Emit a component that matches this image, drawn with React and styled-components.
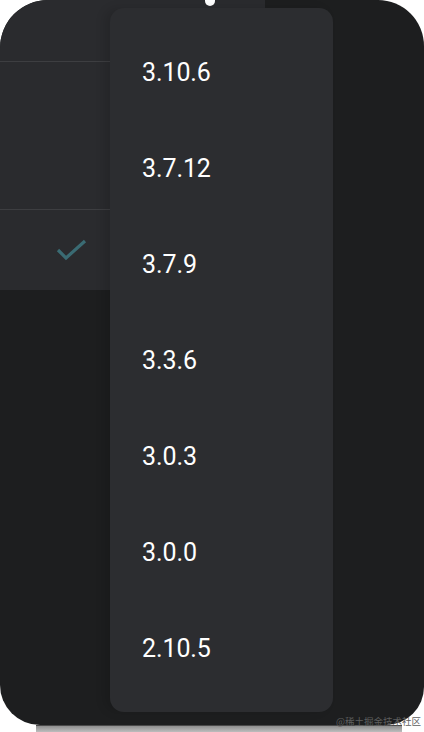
import React from "react";
import styled, { createGlobalStyle } from "styled-components";

const Global = createGlobalStyle`
  html, body { margin: 0; padding: 0; background: #ffffff; }
  body { width: 424px; height: 732px; overflow: hidden; font-family: Roboto, "Noto Sans", sans-serif; }
`;

const Page = styled.div`
  width: 424px;
  height: 732px;
  display: flex;
  flex-direction: column;
  position: relative;
`;

const Screen = styled.div`
  position: relative;
  width: 424px;
  height: 726px;
  background: #1d1e1f;
  border-radius: 48px 46px 38px 40px;
  overflow: hidden;
  display: flex;
  flex-direction: column;
`;

const Sheet = styled.div`
  width: 265px;
  height: 290px;
  background: #2a2b2e;
  display: flex;
  flex-direction: column;
`;

const SheetRow = styled.div`
  height: ${(p) => p.$h}px;
  border-bottom: ${(p) => (p.$line ? "1px solid #3d3e41" : "none")};
  display: flex;
  align-items: center;
  padding-left: 56px;
  box-sizing: border-box;
`;

const Dot = styled.div`
  position: absolute;
  left: 205px;
  top: -4px;
  width: 10px;
  height: 10px;
  border-radius: 50%;
  background: #ffffff;
`;

const Menu = styled.div`
  position: absolute;
  left: 110px;
  top: 8px;
  width: 223px;
  height: 704px;
  box-sizing: border-box;
  padding: 16px 0;
  background: #2c2d30;
  border-radius: 14px;
  box-shadow: -6px 0 10px rgba(0, 0, 0, 0.12);
  display: flex;
  flex-direction: column;
`;

const Item = styled.div`
  height: 96px;
  display: flex;
  align-items: center;
  padding-left: 32px;
  color: #ffffff;
  font-family: Roboto, "Noto Sans", sans-serif;
  font-size: 25px;
  letter-spacing: -0.1px;
`;

const Watermark = styled.div`
  position: absolute;
  right: 3px;
  bottom: 5px;
  font-family: "Noto Sans CJK SC", sans-serif;
  font-size: 9.5px;
  line-height: 12px;
  color: #5e5e5e;
  white-space: nowrap;
`;

const BottomBar = styled.div`
  margin: 0 22px 0 36px;
  height: 6px;
  border-top: 1px solid #4a4a4a;
  background: linear-gradient(#8e8e8e, #bdbdbd);
`;

const Check = () => (
  <svg width="32" height="26" viewBox="0 0 32 26" style={{ marginTop: 1 }}>
    <path d="M2 12 L10 20 L29 3" fill="none" stroke="#3a6b73" strokeWidth="3.2" />
  </svg>
);

const versions = ["3.10.6", "3.7.12", "3.7.9", "3.3.6", "3.0.3", "3.0.0", "2.10.5"];

export default function App() {
  return (
    <Page>
      <Global />
      <Screen>
        <Sheet>
          <SheetRow $h={62} $line />
          <SheetRow $h={148} $line />
          <SheetRow $h={80}>
            <Check />
          </SheetRow>
        </Sheet>
        <Dot />
        <Menu>
          {versions.map((v) => (
            <Item key={v}>{v}</Item>
          ))}
        </Menu>
      </Screen>
      <BottomBar />
      <Watermark>@稀土掘金技术社区</Watermark>
    </Page>
  );
}
